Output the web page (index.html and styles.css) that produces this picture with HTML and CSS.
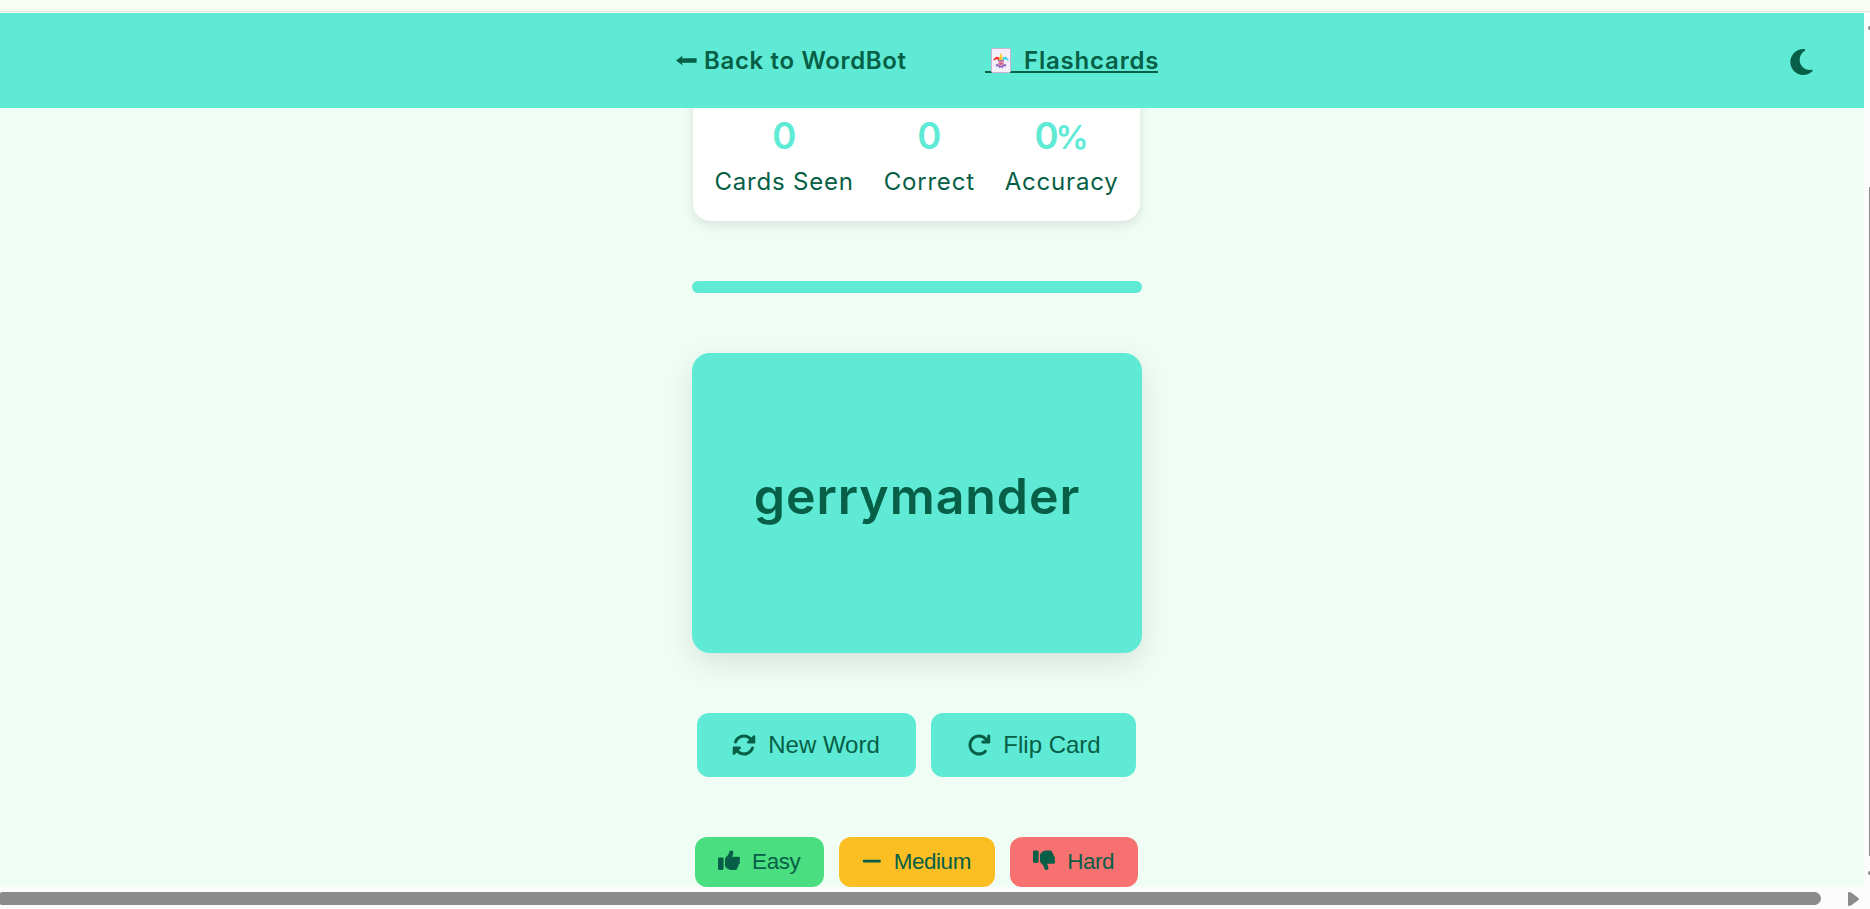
FILE: index.html
```html
<!DOCTYPE html>
<html lang="en">
<head>
<meta charset="utf-8">
<title>WordBot Flashcards</title>
<link rel="stylesheet" href="styles.css">
</head>
<body>
<div class="top-strip"></div>
<div class="viewport">
  <div class="page">
    <header class="header">
      <nav class="nav">
        <a class="nav-link"><svg class="arrow" viewBox="0 0 21 11"><path d="M0 5.500L6.800 0.400L5.800 3.300H20.600V7.700H5.800L6.800 10.600Z" fill="currentColor"/></svg><span class="back-text">Back to WordBot</span></a>
        <a class="nav-link active"><svg class="joker" viewBox="0 0 20 25">
          <rect x=".5" y=".5" width="19" height="24" rx="1.2" fill="#f3eef8" stroke="#c9b3cf"/>
          <path d="M8.500 13.200C7.500 11.500 6 10.600 3.300 11.800C3.500 8 8 7.500 9.500 12Z" fill="#f8312f"/>
          <path d="M11.500 13.200C12.500 11.500 14 10.600 16.700 11.800C16.500 8 12 7.500 10.500 12Z" fill="#26d9f5"/>
          <path d="M7.700 12.800L9.400 6.500H10.600L12.300 12.800Z" fill="#fcc83a"/>
          <circle cx="3.300" cy="11.500" r=".9" fill="#f8312f"/><circle cx="16.700" cy="11.500" r=".9" fill="#26d9f5"/><circle cx="10" cy="6.300" r=".9" fill="#fcc83a"/>
          <path d="M4.500 16.500L7 16L10 18L13 16L15.500 16.500L14.500 18.800L12.500 18L12 20.200L10 19.300L8 20.200L7.500 18L5.500 18.800Z" fill="#8d65c5"/>
          <circle cx="10" cy="14.800" r="2.900" fill="#e58aa0"/><path d="M7 12.200H13V13.200H7Z" fill="#8d65c5"/><path d="M8.500 15.800H11.500" stroke="#a33a67" stroke-width=".8"/>
        </svg><span class="flash-text">Flashcards</span></a>
      </nav>
      <svg class="moon" viewBox="0 32 384 448"><path fill="currentColor" d="M223.500 32C100 32 0 132.300 0 256S100 480 223.500 480c60.600 0 115.500-24.200 155.800-63.400c5-4.900 6.300-12.500 3.100-18.700s-10.100-9.700-17-8.500c-9.800 1.700-19.800 2.600-30.100 2.600c-96.900 0-175.500-78.800-175.500-176c0-65.800 36-123.100 89.300-153.300c6.100-3.500 9.200-10.500 7.700-17.300s-7.300-11.900-14.300-12.500c-6.300-.5-12.600-.8-19-.8z"/></svg>
    </header>
    <main class="main">
      <section class="stats">
        <div class="stat seen"><div class="value">0</div><div class="label">Cards Seen</div></div>
        <div class="stat correct"><div class="value">0</div><div class="label">Correct</div></div>
        <div class="stat accuracy"><div class="value">0<span class="percent">%</span></div><div class="label">Accuracy</div></div>
      </section>
      <div class="progress"></div>
      <section class="card"><span class="word">gerrymander</span></section>
      <div class="row actions">
        <button class="btn new"><svg class="icon" viewBox="0 0 512 512"><path fill="currentColor" d="M142.900 142.900c62.200-62.200 162.700-62.500 225.300-1L327 183c-6.900 6.900-8.900 17.200-5.200 26.200s12.500 14.800 22.200 14.800H472c13.300 0 24-10.700 24-24V72c0-9.700-5.800-18.500-14.800-22.200s-19.300-1.700-26.200 5.200L413.400 96.600c-87.600-86.500-228.700-86.200-315.800 1C73.200 122 55.600 150.700 44.800 181.400c-5.900 16.700 2.900 34.900 19.500 40.800s34.900-2.900 40.800-19.500c7.700-21.800 20.200-42.300 37.800-59.800zM16 312V440c0 9.700 5.800 18.500 14.800 22.200s19.300 1.700 26.200-5.200l41.600-41.600c87.600 86.500 228.700 86.200 315.800-1c24.400-24.400 42.100-53.100 52.900-83.700c5.900-16.700-2.900-34.900-19.500-40.800s-34.900 2.900-40.800 19.500c-7.700 21.800-20.200 42.300-37.800 59.800c-62.200 62.200-162.700 62.500-225.300 1L185 329c6.900-6.900 8.900-17.200 5.200-26.200s-12.500-14.800-22.200-14.800H40c-13.300 0-24 10.700-24 24z"/></svg><span>New Word</span></button>
        <button class="btn flip"><svg class="icon" viewBox="0 0 512 512"><path fill="currentColor" d="M386.300 160H336c-17.700 0-32 14.300-32 32s14.300 32 32 32H464c17.700 0 32-14.300 32-32V64c0-17.700-14.300-32-32-32s-32 14.300-32 32v51.200L414.400 97.600c-87.500-87.500-229.300-87.500-316.800 0s-87.500 229.300 0 316.800s229.300 87.500 316.800 0c12.500-12.500 12.500-32.800 0-45.300s-32.800-12.500-45.300 0c-62.500 62.500-163.800 62.500-226.300 0s-62.500-163.800 0-226.300s163.800-62.500 226.300 0L386.300 160z"/></svg><span>Flip Card</span></button>
      </div>
      <div class="row ratings">
        <button class="btn rate easy"><svg class="icon" viewBox="0 0 512 512"><path id="thumb" fill="currentColor" d="M313.400 32.900c26 5.200 42.900 30.500 37.700 56.500l-2.300 11.400c-5.300 26.700-15.100 52.100-28.800 75.200H464c26.500 0 48 21.500 48 48c0 18.500-10.500 34.600-25.900 42.600C497 275.400 504 288.900 504 304c0 23.400-16.800 42.900-38.900 47.100c4.400 7.300 6.900 15.800 6.900 24.900c0 21.300-13.900 39.400-33.100 45.600c.7 3.300 1.100 6.800 1.100 10.400c0 26.500-21.500 48-48 48H294.500c-19 0-37.500-5.600-53.300-16.100l-38.500-25.700C176 420.400 160 390.400 160 358.300V247.100c0-29.200 13.300-56.700 36-75l7.400-5.900c26.500-21.200 44.600-51 51.200-84.200l2.300-11.400c5.200-26 30.500-42.900 56.500-37.700zM32 192H96c17.700 0 32 14.300 32 32V448c0 17.700-14.300 32-32 32H32c-17.700 0-32-14.300-32-32V224c0-17.700 14.300-32 32-32z"/></svg><span>Easy</span></button>
        <button class="btn rate medium"><svg class="icon minus" viewBox="0 0 448 512"><path fill="currentColor" d="M432 256c0 17.700-14.300 32-32 32H48c-17.700 0-32-14.300-32-32s14.300-32 32-32h352c17.700 0 32 14.300 32 32z"/></svg><span>Medium</span></button>
        <button class="btn rate hard"><svg class="icon" viewBox="0 0 512 512"><use href="#thumb" transform="matrix(1 0 0 -1 0 512)"/></svg><span>Hard</span></button>
      </div>
    </main>
  </div>
  <div class="scroll-y"><i class="nub"></i><i class="thumb-y"></i><i class="nub"></i></div>
</div>
<div class="scroll-x"><div class="thumb-x"></div><svg class="scroll-arrow" viewBox="0 0 11 14"><path d="M0 1Q0 0 1 0L3 .5L10.500 6Q11.300 7 10.500 8L3 13.500L1 14Q0 14 0 13Z" fill="#8b8b8b"/></svg></div>
</body>
</html>
```
FILE: styles.css
```css
* { box-sizing: border-box; }
body {
  margin: 0;
  height: 909px;
  overflow: hidden;
  display: flex;
  flex-direction: column;
  color: #065f46;
  background: #fcfcfc;
  font-family: Inter, "Open Sans", sans-serif;
}
.top-strip {
  height: 13px;
  flex: none;
  background: linear-gradient(#f9fcf2 0 11px, #dfe7da 11px 12px, #f9fcf2 12px);
}
.viewport { display: flex; height: 874px; flex: none; }
.page { width: 1864px; background: #f0fdf4; overflow: hidden; }

.header {
  position: relative;
  z-index: 2;
  height: 95px;
  padding: 0 51px 0 676px;
  display: flex;
  align-items: center;
  justify-content: space-between;
  background: #5eead4;
}
.nav { display: flex; gap: 79px; font-size: 24px; font-weight: 600; line-height: 36px; white-space: nowrap; }
.nav-link { display: flex; align-items: center; height: 36px; }
.nav-link:first-child { width: 230px; }
.arrow { flex: none; width: 21px; height: 11px; margin-right: 7px; }
.back-text { letter-spacing: .65px; }
.flash-text { letter-spacing: .8px; }
.active { position: relative; width: 173px; padding-left: 6px; }
.active::before {
  content: "";
  position: absolute;
  left: 0;
  right: 0;
  top: 28px;
  height: 2px;
  background: #065f46;
}
.joker { position: relative; flex: none; width: 20px; height: 25px; margin-right: 13px; }
.moon { width: 23px; height: 26px; margin-top: 3px; }

.main { width: 450px; margin-left: 692px; display: flex; flex-direction: column; align-items: center; }
.stats {
  width: 447px;
  height: 153px;
  margin: -40px 2px 60px 0;
  padding: 41px 21px 0 22px;
  display: flex;
  justify-content: space-between;
  background: #fff;
  border-radius: 18px;
  box-shadow: 0 4px 12px rgba(0, 0, 0, .1);
}
.stat { display: flex; flex-direction: column; align-items: center; white-space: nowrap; }
.value { color: #5eead4; font-size: 36.5px; font-weight: 600; line-height: 55px; }
.percent { font-size: 33px; margin-left: -3px; line-height: 1; }
.label { font-size: 24px; line-height: 36px; letter-spacing: .8px; }
.progress { width: 450px; height: 12px; border-radius: 6px; background: #5eead4; }
.card {
  width: 450px;
  height: 300px;
  margin: 60px 0;
  display: flex;
  align-items: center;
  justify-content: center;
  background: #5eead4;
  border-radius: 18px;
  box-shadow: 0 10px 30px rgba(0, 0, 0, .1);
}
.word { font-size: 50px; font-weight: 600; line-height: 72px; letter-spacing: .95px; margin: -15px 0 0; }

.row { display: flex; gap: 15px; margin-right: 2px; }
.actions { margin-bottom: 60px; }
.btn {
  height: 64px;
  padding: 0;
  border: 0;
  border-radius: 12px;
  display: flex;
  align-items: center;
  justify-content: center;
  gap: 12px;
  color: #065f46;
  background: #5eead4;
  font: 24px "Liberation Sans", Arial, sans-serif;
  white-space: nowrap;
}
.icon { width: 24px; height: 24px; }
.new { width: 219px; }
.flip { width: 205px; padding-left: 2px; }
.rate { height: 50px; font-size: 22.4px; letter-spacing: -.4px; }
.rate .icon { width: 22.4px; height: 22.4px; margin-top: -3px; }
.rate .minus { width: 19.6px; margin-top: -1px; }
.easy { width: 129px; background: #4ade80; }
.medium { width: 156px; background: #fbbf24; }
.hard { width: 128px; background: #f87171; }

.scroll-y {
  width: 6px;
  padding-top: 13px;
  display: flex;
  flex-direction: column;
  align-items: flex-end;
  background: #fcfcfc;
}
.nub { width: 2px; height: 4px; border-radius: 2px 0 0 2px; background: #8b8b8b; }
.thumb-y { width: 1px; height: 669px; margin: 157px 0 15px; background: #8b8b8b; }
.scroll-x { display: flex; align-items: flex-start; gap: 27px; height: 22px; padding-top: 5px; background: #fcfcfc; }
.thumb-x { width: 1821px; height: 13px; border-radius: 2px 7px 7px 2px; background: #8b8b8b; }
.scroll-arrow { width: 11px; height: 14px; }
```
